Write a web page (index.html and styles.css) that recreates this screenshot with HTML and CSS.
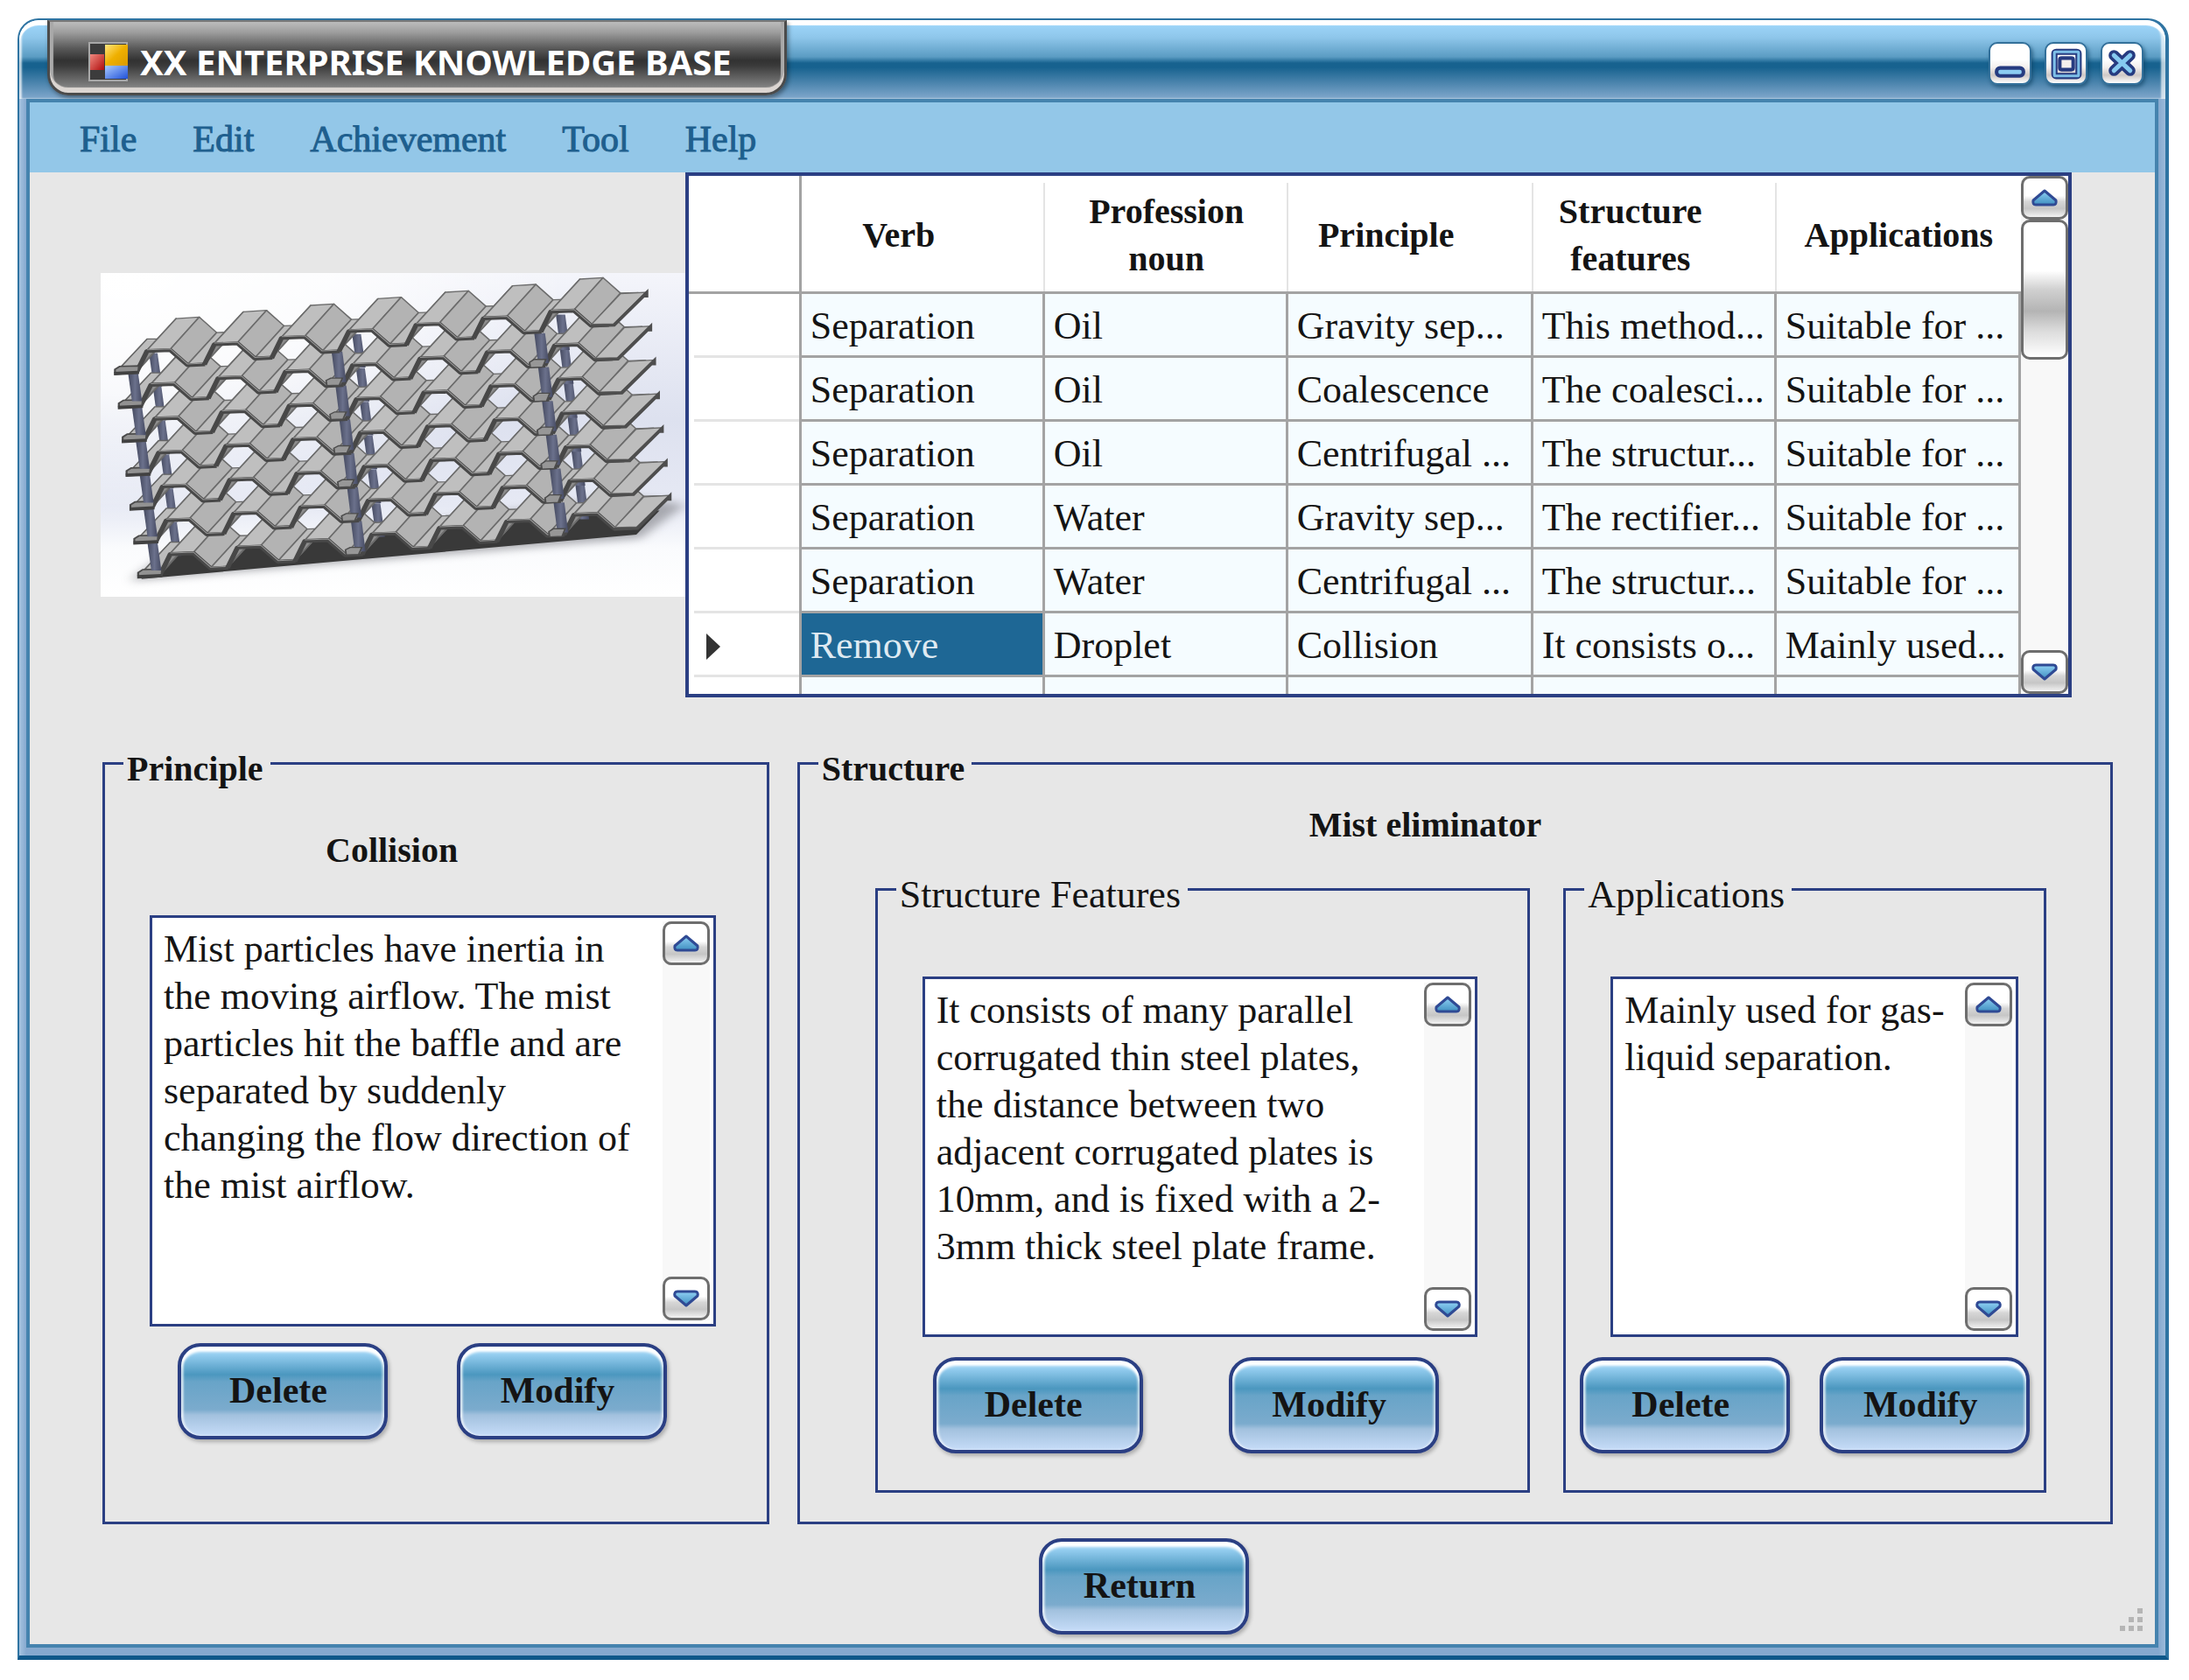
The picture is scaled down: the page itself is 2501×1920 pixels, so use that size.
FILE: index.html
```html
<!DOCTYPE html>
<html lang="en">
<head>
<meta charset="utf-8">
<meta name="viewport" content="width=device-width, initial-scale=1">
<title>XX Enterprise Knowledge Base</title>
<link rel="stylesheet" href="styles.css">
</head>
<body>
<svg class="sprite" aria-hidden="true">
  <defs>
    <linearGradient id="arrowFill" x1="0" y1="0" x2="0" y2="1"><stop offset="0" stop-color="#8fd0f4"/><stop offset="1" stop-color="#3f8fc0"/></linearGradient>
    <symbol id="arrow-up" viewBox="0 0 32 22"><path d="M16 3 L29 14 Q30 19 26 19 H6 Q2 19 3 14 Z" fill="url(#arrowFill)" stroke="#2f4a94" stroke-width="3" stroke-linejoin="round"/></symbol>
    <symbol id="arrow-down" viewBox="0 0 32 22"><path d="M16 19 L29 8 Q30 3 26 3 H6 Q2 3 3 8 Z" fill="url(#arrowFill)" stroke="#2f4a94" stroke-width="3" stroke-linejoin="round"/></symbol>
  </defs>
</svg>
<div class="window">
  <header class="titlebar">
    <div class="tab">
      <svg class="app-icon" viewBox="0 0 45 45" aria-hidden="true">
        <defs>
          <linearGradient id="icoY" x1="0" y1="0" x2="1" y2="1"><stop offset="0" stop-color="#ffe680"/><stop offset=".5" stop-color="#efb000"/><stop offset="1" stop-color="#d99a00"/></linearGradient>
          <linearGradient id="icoR" x1="0" y1="0" x2="1" y2="1"><stop offset="0" stop-color="#f08a80"/><stop offset="1" stop-color="#b00d0d"/></linearGradient>
          <linearGradient id="icoB" x1="0" y1="0" x2="1" y2="1"><stop offset="0" stop-color="#a9cbff"/><stop offset="1" stop-color="#1f50d8"/></linearGradient>
        </defs>
        <rect x="1" y="1" width="43" height="43" fill="#3c3c3c" stroke="#a8a8a8" stroke-width="2"/>
        <rect x="2" y="14" width="16" height="18" fill="url(#icoR)"/>
        <rect x="19" y="3" width="26" height="24" fill="url(#icoY)"/>
        <rect x="19" y="27" width="26" height="15" fill="url(#icoB)"/>
      </svg>
      <h1 class="title">XX ENTERPRISE KNOWLEDGE BASE</h1>
    </div>
    <div class="controls">
      <button class="control" type="button" aria-label="Minimize">
        <svg viewBox="0 0 44 44"><rect x="7" y="27" width="30" height="9" rx="4" fill="#8ccdf3" stroke="#263b80" stroke-width="4"/></svg>
      </button>
      <button class="control" type="button" aria-label="Maximize">
        <svg viewBox="0 0 44 44"><rect x="9" y="9" width="27" height="27" rx="2" fill="none" stroke="#263b80" stroke-width="7"/><rect x="9" y="9" width="27" height="27" rx="1" fill="none" stroke="#7dbfe8" stroke-width="3"/><rect x="15" y="16" width="15" height="13" rx="2" fill="#f4f0ee" stroke="#263b80" stroke-width="4"/></svg>
      </button>
      <button class="control" type="button" aria-label="Close">
        <svg viewBox="0 0 44 44"><g fill="none" stroke-linecap="round"><path d="M13 13 L31 30 M31 13 L13 30" stroke="#263b80" stroke-width="12"/><path d="M13 13 L31 30 M31 13 L13 30" stroke="#86c9f0" stroke-width="5"/></g></svg>
      </button>
    </div>
  </header>

  <div class="client">
    <nav class="menu">
      <button type="button">File</button>
      <button type="button">Edit</button>
      <button type="button">Achievement</button>
      <button type="button">Tool</button>
      <button type="button">Help</button>
    </nav>

    <main>
      <section class="browse">
        <figure class="preview">
          <svg viewBox="35 36 1511 1109" preserveAspectRatio="none" role="img" aria-label="Corrugated plate mist eliminator">
            <defs>
              <linearGradient id="sky" x1="0" y1="0" x2="0" y2="1"><stop offset="0" stop-color="#f4f5fb"/><stop offset=".45" stop-color="#dde1ef"/><stop offset=".72" stop-color="#e6e9f4"/><stop offset=".85" stop-color="#fafbfd"/><stop offset="1" stop-color="#fff"/></linearGradient>
              <radialGradient id="glow" cx=".05" cy=".02" r=".75"><stop offset="0" stop-color="#fff"/><stop offset=".45" stop-color="#fff" stop-opacity=".8"/><stop offset="1" stop-color="#fff" stop-opacity="0"/></radialGradient>
              <linearGradient id="post" x1="0" y1="0" x2="1" y2="0"><stop offset="0" stop-color="#454a60"/><stop offset=".5" stop-color="#6b718c"/><stop offset="1" stop-color="#454a62"/></linearGradient>
              <filter id="soft" x="-10%" y="-40%" width="120%" height="180%"><feGaussianBlur stdDeviation="14"/></filter>
              <g id="cell" stroke="#6c6c6c" stroke-width="4" stroke-linejoin="round">
                <path d="M-26 70 L0 0 L75 -108 L49 -38 Z" fill="#8d8d8d"/>
                <path d="M0 0 L60 -3 L135 -113 L75 -108 Z" fill="#bfbfbf"/>
                <path d="M60 -3 L105 49 L180 -60 L135 -113 Z" fill="#b3b3b3"/>
                <path d="M105 49 L150 46 L225 -62 L180 -60 Z" fill="#bdbdbd"/>
                <path d="M-26 73 L0 3 L60 0 L105 52 L150 49" fill="none" stroke="#484848" stroke-width="13"/>
                <path d="M0 -1 L60 -4 L105 48 L150 45" fill="none" stroke="#969696" stroke-width="3"/>
              </g>
              <g id="sheet">
                <path d="M75 375 L130 372 L205 262 L155 262 Z" fill="#bdbdbd" stroke="#646464" stroke-width="4"/>
                <use href="#cell" x="155" y="300"/>
                <use href="#cell" x="329" y="277"/>
                <use href="#cell" x="503" y="255"/>
                <use href="#cell" x="677" y="232"/>
                <use href="#cell" x="851" y="210"/>
                <use href="#cell" x="1025" y="188"/>
                <use href="#cell" x="1199" y="165"/>
                <path d="M1304 212 L1362 210 L1446 102 L1379 107 Z" fill="#bdbdbd" stroke="#6c6c6c" stroke-width="4"/>
                <path d="M72 366 L84 356 L134 354 L132 380 L72 384 Z" fill="#929292" stroke="#4a4a4a" stroke-width="5"/>
                <path d="M70 380 L132 376" stroke="#414141" stroke-width="10"/>
                <path d="M1302 217 L1362 215 L1446 105 V120" fill="none" stroke="#4e4e4e" stroke-width="10"/>
              </g>
              <g id="rear-posts" fill="url(#post)">
                <path d="M160 310 H182 L194 425 H172 Z"/>
                <path d="M685 245 H708 L720 360 H697 Z"/>
                <path d="M1212 178 H1236 L1248 300 H1224 Z"/>
              </g>
              <g id="front-posts" fill="url(#post)">
                <path d="M106 380 H132 L142 475 H116 Z"/>
                <path d="M632 305 H660 L670 410 H642 Z"/>
                <path d="M1156 242 H1184 L1194 345 H1166 Z"/>
                <g fill="#979797" stroke="#4c4c4c" stroke-width="4">
                  <path d="M618 404 L630 396 H660 L652 420 L620 422 Z"/>
                  <path d="M1144 342 L1156 332 H1186 L1178 358 L1146 360 Z"/>
                </g>
              </g>
            </defs>
            <rect x="35" y="36" width="1511" height="1109" fill="url(#sky)"/>
            <rect x="35" y="36" width="1511" height="1109" fill="url(#glow)"/>
            <path d="M110 1090 L1430 945 L1546 830 L1400 800 L200 1000 Z" fill="#8b8c92" opacity=".7" filter="url(#soft)"/>
            <path d="M140 1084 L1420 932 L1480 850 L1240 850 L215 985 Z" fill="#393939"/>
            <use href="#rear-posts" x="50" y="580"/>
            <use href="#sheet" x="60" y="696"/>
            <use href="#front-posts" x="50" y="580"/>
            <use href="#rear-posts" x="40" y="464"/>
            <use href="#sheet" x="50" y="580"/>
            <use href="#front-posts" x="40" y="464"/>
            <use href="#rear-posts" x="30" y="348"/>
            <use href="#sheet" x="40" y="464"/>
            <use href="#front-posts" x="30" y="348"/>
            <use href="#rear-posts" x="20" y="232"/>
            <use href="#sheet" x="30" y="348"/>
            <use href="#front-posts" x="20" y="232"/>
            <use href="#rear-posts" x="10" y="116"/>
            <use href="#sheet" x="20" y="232"/>
            <use href="#front-posts" x="10" y="116"/>
            <use href="#rear-posts"/>
            <use href="#sheet" x="10" y="116"/>
            <use href="#front-posts"/>
            <use href="#sheet"/>
          </svg>
        </figure>

        <div class="grid">
          <div class="grid-view">
            <table>
              <colgroup><col class="col-mark"><col class="col-noun"><col class="col-noun"><col class="col-principle"><col class="col-noun"><col></colgroup>
              <thead>
                <tr>
                  <td class="corner"></td>
                  <th scope="col" class="sortable">Verb</th>
                  <th scope="col">Profession noun</th>
                  <th scope="col" class="sortable">Principle</th>
                  <th scope="col" class="sortable">Structure features</th>
                  <th scope="col">Applications</th>
                </tr>
              </thead>
              <tbody>
                <tr><td class="mark"></td><td>Separation</td><td>Oil</td><td>Gravity sep...</td><td>This method...</td><td>Suitable for ...</td></tr>
                <tr><td class="mark"></td><td>Separation</td><td>Oil</td><td>Coalescence</td><td>The coalesci...</td><td>Suitable for ...</td></tr>
                <tr><td class="mark"></td><td>Separation</td><td>Oil</td><td>Centrifugal ...</td><td>The structur...</td><td>Suitable for ...</td></tr>
                <tr><td class="mark"></td><td>Separation</td><td>Water</td><td>Gravity sep...</td><td>The rectifier...</td><td>Suitable for ...</td></tr>
                <tr><td class="mark"></td><td>Separation</td><td>Water</td><td>Centrifugal ...</td><td>The structur...</td><td>Suitable for ...</td></tr>
                <tr><td class="mark"><svg class="pointer" viewBox="0 0 16 30" aria-hidden="true"><path d="M0 0 L16 15 L0 30 Z" fill="#333"/></svg></td><td class="selected">Remove</td><td>Droplet</td><td>Collision</td><td>It consists o...</td><td>Mainly used...</td></tr>
                <tr><td class="mark"></td><td></td><td></td><td></td><td></td><td></td></tr>
              </tbody>
            </table>
          </div>
          <div class="scroll">
            <button class="step" type="button" aria-label="Scroll up"><svg><use href="#arrow-up"/></svg></button>
            <div class="thumb"></div>
            <button class="step step-end" type="button" aria-label="Scroll down"><svg><use href="#arrow-down"/></svg></button>
          </div>
        </div>
      </section>

      <section class="details">
        <fieldset class="group">
          <legend>Principle</legend>
          <div class="principle">
            <h2 class="name"><label for="principle">Collision</label></h2>
            <div class="memo">
              <textarea id="principle">Mist particles have inertia in the moving airflow. The mist particles hit the baffle and are separated by suddenly changing the flow direction of the mist airflow.</textarea>
              <div class="scroll">
                <button class="step" type="button" aria-label="Scroll up"><svg><use href="#arrow-up"/></svg></button>
                <button class="step step-end" type="button" aria-label="Scroll down"><svg><use href="#arrow-down"/></svg></button>
              </div>
            </div>
            <div class="actions">
              <button class="button" type="button">Delete</button>
              <button class="button" type="button">Modify</button>
            </div>
          </div>
        </fieldset>

        <fieldset class="group">
          <legend>Structure</legend>
          <div class="structure">
            <h2 class="name">Mist eliminator</h2>
            <div class="parts">
              <fieldset class="group part features">
                <legend><label for="features">Structure Features</label></legend>
                <div class="memo">
                  <textarea id="features">It consists of many parallel corrugated thin steel plates, the distance between two adjacent corrugated plates is 10mm, and is fixed with a 2-3mm thick steel plate frame.</textarea>
                  <div class="scroll">
                    <button class="step" type="button" aria-label="Scroll up"><svg><use href="#arrow-up"/></svg></button>
                    <button class="step step-end" type="button" aria-label="Scroll down"><svg><use href="#arrow-down"/></svg></button>
                  </div>
                </div>
                <div class="actions">
                  <button class="button" type="button">Delete</button>
                  <button class="button" type="button">Modify</button>
                </div>
              </fieldset>
              <fieldset class="group part uses">
                <legend><label for="uses">Applications</label></legend>
                <div class="memo">
                  <textarea id="uses">Mainly used for gas-liquid separation.</textarea>
                  <div class="scroll">
                    <button class="step" type="button" aria-label="Scroll up"><svg><use href="#arrow-up"/></svg></button>
                    <button class="step step-end" type="button" aria-label="Scroll down"><svg><use href="#arrow-down"/></svg></button>
                  </div>
                </div>
                <div class="actions">
                  <button class="button" type="button">Delete</button>
                  <button class="button" type="button">Modify</button>
                </div>
              </fieldset>
            </div>
          </div>
        </fieldset>
      </section>

      <footer class="footer">
        <button class="button" type="button">Return</button>
      </footer>
    </main>

    <svg class="grip" viewBox="0 0 26 26" aria-hidden="true"><g fill="#b5b5b5"><rect x="20" y="0" width="6" height="6"/><rect x="10" y="10" width="6" height="6"/><rect x="20" y="10" width="6" height="6"/><rect x="0" y="20" width="6" height="6"/><rect x="10" y="20" width="6" height="6"/><rect x="20" y="20" width="6" height="6"/></g></svg>
  </div>
</div>
</body>
</html>
```

FILE: styles.css
```css
:root {
  --navy: #2b3f83;
  --face: #e7e7e7;
  --line: #a3a3a3;
  --serif: "Liberation Serif", serif;
}

* { box-sizing: border-box; }

body {
  margin: 0;
  padding: 21px 23px 25px 20px;
  background: #fff;
  color: #141414;
  font: 44px/54px var(--serif);
}

button, textarea { font: inherit; color: inherit; }

.sprite { position: absolute; width: 0; height: 0; }

/* Window frame */
.window {
  overflow: hidden;
  border: 2px solid #2f74a2;
  border-right-width: 4px;
  border-bottom: 5px solid #10588a;
  border-radius: 24px 24px 0 0;
  background: linear-gradient(90deg, #a5c3e0, #86a9cf 8px, #86a9cf calc(100% - 8px), #9bbada);
}

.titlebar {
  display: flex;
  justify-content: space-between;
  align-items: flex-start;
  height: 90px;
  padding: 0 25px 0 32px;
  border-radius: 22px 22px 0 0;
  background: linear-gradient(#9cd4f8 6px, #8ec6ea 20px, #5b9cc3 42px, #17628f 49px, #17628f 54px, #7ba4c9 88px);
  box-shadow: inset 0 6px 1px #fff, inset 3px 0 2px #ffffffb0, inset -5px 0 2px #ffffffb0;
}

.tab {
  display: flex;
  align-items: center;
  gap: 14px;
  height: 86px;
  padding: 16px 60px 6px 44px;
  border: 3px solid #4b4b4b;
  border-top: 2px solid #777;
  border-radius: 0 0 24px 24px;
  background: linear-gradient(#bdbdbd, #9d9d9d 12px, #5a5a5a 30px, #323232 44px, #3a3a3a 50px, #8c8c8c 78px);
  box-shadow: inset 0 -6px 1px #dcd6d2, inset 4px 0 1px #a9a9a9, inset -4px 0 1px #a9a9a9, 2px 3px 5px #00000060;
}

.app-icon { width: 45px; height: 45px; }

.title {
  margin: 0;
  color: #fff;
  font: 700 40px/48px "Noto Sans", sans-serif;
  white-space: nowrap;
}

.controls { display: flex; gap: 15px; padding-top: 25px; }

.control {
  width: 49px;
  height: 49px;
  padding: 0;
  border: 2px solid #33709a;
  border-radius: 10px;
  background: linear-gradient(#fff 40%, #f3efed 60%, #cfc8c6 80%, #fff);
  box-shadow: 2px 3px 4px #0a3c5e90;
}

.control svg { display: block; width: 100%; height: 100%; }

.client {
  position: relative;
  margin: 0 8px 9px;
  border: 4px solid #4583ae;
  background: var(--face);
}

.menu {
  display: flex;
  align-items: center;
  gap: 64px;
  height: 80px;
  padding: 4px 57px 0;
  background: #93c7e8;
}

.menu button {
  padding: 0;
  border: 0;
  background: none;
  color: #1e5f8e;
  font-size: 42px;
  -webkit-text-stroke: 1px #1e5f8e;
}

/* Picture and record grid */
.browse {
  display: grid;
  grid-template-columns: 668fr 1585fr;
  padding: 0 95px 0 81px;
}

.preview { margin: 115px 0 0; height: 370px; }
.preview svg { display: block; width: 100%; height: 100%; }

.grid {
  display: flex;
  height: 600px;
  overflow: hidden;
  border: 4px solid var(--navy);
  background: #fff;
}

.grid-view { flex: 1; min-width: 0; overflow: hidden; }

table {
  width: 100%;
  table-layout: fixed;
  border-collapse: separate;
  border-spacing: 0;
}

.col-mark { width: 129px; }
.col-noun { width: 278px; }
.col-principle { width: 280px; }

th, td { padding: 0; border: 0 solid var(--line); }

thead th, thead td {
  height: 135px;
  border-bottom-width: 3px;
  background: linear-gradient(#e4e4e4, #e4e4e4) no-repeat right 8px / 2px 100%;
}

thead th { padding: 3px 10px 0; font-size: 40px; }
thead th:last-child { background: none; }
thead .sortable { padding-right: 66px; }
thead .corner { border-right-width: 3px; background: none; }

tbody td {
  height: 73px;
  padding: 3px 0 0 10px;
  overflow: hidden;
  border-width: 0 3px 3px 0;
  background: #f5fcff;
  white-space: nowrap;
}

tbody .mark {
  padding-left: 20px;
  border-bottom-width: 0;
  background: linear-gradient(#e4e4e4, #e4e4e4) no-repeat 6px bottom / 100% 3px;
}

tbody .selected { background: #1e6795; color: #dfeaf2; }

.pointer { display: block; width: 16px; height: 30px; }

/* Scroll bars */
.scroll {
  display: flex;
  flex-direction: column;
  width: 54px;
  background: #f8f8f8;
}

.step {
  display: grid;
  place-items: center;
  height: 50px;
  padding: 0;
  border: 3px solid #6e6e6e;
  border-radius: 10px;
  background: linear-gradient(#fff 45%, #d6d6d6 60%, #c6c6c6 78%, #f2f2f2);
}

.step-end { margin-top: auto; }
.step svg { width: 32px; height: 22px; }

.thumb {
  height: 160px;
  border: 3px solid #6e6e6e;
  border-radius: 10px;
  background: linear-gradient(#fff 36%, #d0d0d0 50%, #b4b4b4 66%, #dadada 80%, #fff);
}

/* Group boxes */
.details {
  display: grid;
  grid-template-columns: 762fr 1504fr;
  gap: 32px;
  padding: 45px 48px 0 83px;
}

.group {
  min-width: 0;
  margin: 0;
  padding: 0;
  border: 3px solid var(--navy);
}

.group > legend {
  margin-left: 21px;
  padding: 14px 8px 0 4px;
  font-weight: 700;
  font-size: 40px;
  line-height: 46px;
}

.part > legend {
  font-weight: 400;
  font-size: 44px;
  line-height: 50px;
}

.name {
  margin: 0;
  font-weight: 700;
  font-size: 40px;
  line-height: 46px;
}

.principle { padding: 47px 58px 92px 51px; }
.principle .name { padding-left: 201px; }
.principle .memo { height: 470px; margin-top: 51px; }
.principle .actions { gap: 79px; margin-top: 19px; padding-left: 32px; }

.structure { padding: 18px 73px 33px 86px; }
.structure .name { padding-left: 496px; }

.parts {
  display: grid;
  grid-template-columns: 749fr 552fr;
  gap: 38px;
  margin-top: 18px;
}

.part .memo { height: 412px; margin-top: 68px; }
.part .actions { margin-top: 23px; padding-bottom: 42px; }

.features .memo { margin-left: 51px; margin-right: 57px; }
.features .actions { gap: 98px; padding-left: 63px; }
.uses .memo { margin-left: 51px; margin-right: 29px; }
.uses .actions { gap: 34px; padding-left: 16px; }

.memo {
  display: flex;
  padding: 4px;
  border: 3px solid var(--navy);
  background: #fff;
}

.memo textarea {
  flex: 1;
  min-width: 0;
  padding: 5px 26px 0 9px;
  overflow: hidden;
  border: 0;
  outline: 0;
  background: none;
  resize: none;
}

.uses textarea { padding-right: 8px; }

.actions { display: flex; }

.button {
  flex: none;
  width: 240px;
  height: 110px;
  padding: 0 10px 2px 0;
  border: 4px solid var(--navy);
  border-radius: 26px;
  background: linear-gradient(#98d0f2 8px, #4b97bf 32px, #68a4c8 40px, #7babcd 72px, #a2c1de 78px, #c6dcf8);
  box-shadow: inset 0 6px 3px #fff, inset 3px 0 2px #ffffff90, inset -3px 0 2px #ffffff60, 2px 3px 4px #00000040;
  font-weight: 700;
  font-size: 42px;
}

.footer {
  display: flex;
  justify-content: center;
  padding: 16px 0 11px 118px;
}

.grip {
  position: absolute;
  right: 14px;
  bottom: 15px;
  width: 26px;
  height: 26px;
}
```
